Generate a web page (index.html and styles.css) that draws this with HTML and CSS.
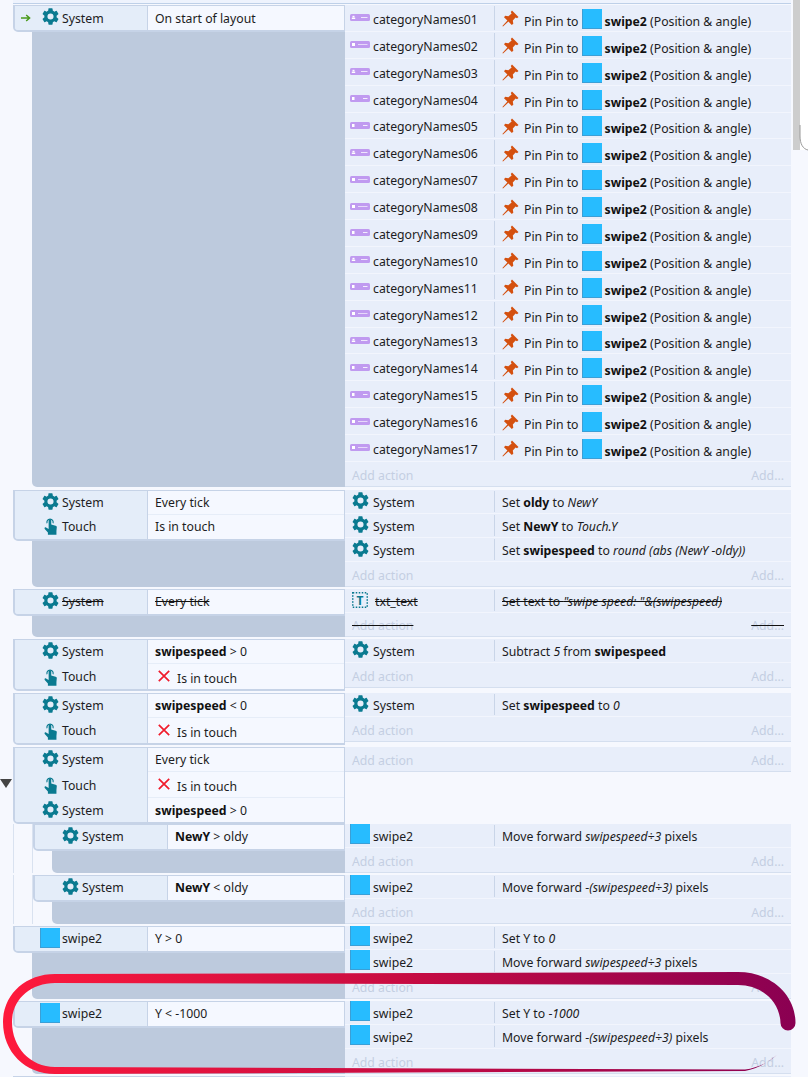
FILE: index.html
```html
<!DOCTYPE html>
<html lang="en">
<head>
<meta charset="utf-8">
<title>Event sheet</title>
<link rel="stylesheet" href="styles.css">
</head>
<body>
<svg class="defs" width="0" height="0" aria-hidden="true">
  <defs>
    <symbol id="gear" viewBox="2.5 2 19 20"><path d="M19.14 12.94c.04-.3.06-.61.06-.94 0-.32-.02-.64-.07-.94l2.03-1.58a.49.49 0 0 0 .12-.61l-1.92-3.32a.488.488 0 0 0-.59-.22l-2.39.96c-.5-.38-1.03-.7-1.62-.94l-.36-2.54a.484.484 0 0 0-.48-.41h-3.84c-.24 0-.43.17-.47.41l-.36 2.54c-.59.24-1.13.57-1.62.94l-2.39-.96c-.22-.08-.47 0-.59.22L2.74 8.87c-.12.21-.08.47.12.61l2.03 1.58c-.05.3-.09.63-.09.94s.02.64.07.94l-2.03 1.58a.49.49 0 0 0-.12.61l1.92 3.32c.12.22.37.29.59.22l2.39-.96c.5.38 1.03.7 1.62.94l.36 2.54c.05.24.24.41.48.41h3.84c.24 0 .44-.17.47-.41l.36-2.54c.59-.24 1.13-.56 1.62-.94l2.39.96c.22.08.47 0 .59-.22l1.92-3.32c.12-.22.07-.47-.12-.61l-2.01-1.58zM12 15.6A3.6 3.6 0 1 1 12 8.4a3.6 3.6 0 0 1 0 7.2z" fill="#0a7a90"/></symbol>
    <symbol id="touch" viewBox="0 0 14 19"><path d="M3.3 6.6A3.4 3.4 0 1 1 9.7 6.6" fill="none" stroke="#0a7a90" stroke-width="1.2"/><path d="M5 3.6a1.4 1.4 0 0 1 2.8 0V8l4.7 1.1c.9.2 1.3.8 1.3 1.6L13.4 15v4H4.2v-2.4L.8 12.6c-.7-1 .4-2.1 1.4-1.4L5 12.6z" fill="#0a7a90"/></symbol>
    <symbol id="pin" viewBox="0 0 17 17"><path d="M10 .5 16.5 7 15 8.2 13.6 7.4 10.8 10.6 11.3 13.8 9.8 15 6.4 11.6 1 16.6.4 16 5.4 10.6 2 7.2 3.2 5.7 6.4 6.2 9.6 3.4 8.8 2z" fill="#d4500f"/></symbol>
    <symbol id="cross" viewBox="0 0 12 12"><path d="M.8.8 11.2 11.2M11.2.8.8 11.2" stroke="#f01c2c" stroke-width="1.7" fill="none"/></symbol>
    <symbol id="arrow" viewBox="0 0 10 8"><path d="M0 4H8M5.2 1 8.6 4 5.2 7" stroke="#4a9a1c" stroke-width="1.5" fill="none"/></symbol>
    <symbol id="cat1" viewBox="0 0 20 7"><rect width="20" height="7" rx="1.5" fill="#c09af0"/><rect x="2.5" y="1.8" width="2" height="1.6" fill="#fff"/><rect x="1.8" y="3.6" width="3.4" height="1.4" fill="#fff"/><rect x="11" y="3" width="6.5" height="1" fill="#efe6fc"/></symbol>
    <symbol id="cat2" viewBox="0 0 20 7"><rect width="20" height="7" rx="1.5" fill="#c09af0"/><rect x="2" y="2" width="3" height="3" fill="#fff"/><rect x="8" y="3" width="9.5" height="1" fill="#e6d8fa"/></symbol>
    <symbol id="cat3" viewBox="0 0 20 7"><rect width="20" height="7" rx="1.5" fill="#c09af0"/><rect x="2" y="2" width="2.5" height="3" fill="#fff"/><rect x="13" y="3" width="4.5" height="1" fill="#f3edfd"/></symbol>
  </defs>
</svg>

<main class="sheet">
  <div class="prev"></div>

  <section class="block b-first">
    <div class="conds">
      <div class="clist">
        <div class="crow r-first"><div class="cname"><svg class="i-arrow"><use href="#arrow"/></svg><svg class="i-gear"><use href="#gear"/></svg><span>System</span></div><div class="cexpr">On start of layout</div></div>
      </div>
      <div class="gray"></div>
    </div>
    <div class="actions">
      <div class="act tall"><div class="aname"><svg class="i-cat"><use href="#cat1"/></svg><span>categoryNames01</span></div><div class="aexpr"><svg class="i-pin"><use href="#pin"/></svg><span>Pin Pin to</span><i class="swatch"></i><span><b>swipe2</b> (Position &amp; angle)</span></div></div>
      <div class="act tall"><div class="aname"><svg class="i-cat"><use href="#cat2"/></svg><span>categoryNames02</span></div><div class="aexpr"><svg class="i-pin"><use href="#pin"/></svg><span>Pin Pin to</span><i class="swatch"></i><span><b>swipe2</b> (Position &amp; angle)</span></div></div>
      <div class="act tall"><div class="aname"><svg class="i-cat"><use href="#cat1"/></svg><span>categoryNames03</span></div><div class="aexpr"><svg class="i-pin"><use href="#pin"/></svg><span>Pin Pin to</span><i class="swatch"></i><span><b>swipe2</b> (Position &amp; angle)</span></div></div>
      <div class="act tall"><div class="aname"><svg class="i-cat"><use href="#cat3"/></svg><span>categoryNames04</span></div><div class="aexpr"><svg class="i-pin"><use href="#pin"/></svg><span>Pin Pin to</span><i class="swatch"></i><span><b>swipe2</b> (Position &amp; angle)</span></div></div>
      <div class="act tall"><div class="aname"><svg class="i-cat"><use href="#cat3"/></svg><span>categoryNames05</span></div><div class="aexpr"><svg class="i-pin"><use href="#pin"/></svg><span>Pin Pin to</span><i class="swatch"></i><span><b>swipe2</b> (Position &amp; angle)</span></div></div>
      <div class="act tall"><div class="aname"><svg class="i-cat"><use href="#cat1"/></svg><span>categoryNames06</span></div><div class="aexpr"><svg class="i-pin"><use href="#pin"/></svg><span>Pin Pin to</span><i class="swatch"></i><span><b>swipe2</b> (Position &amp; angle)</span></div></div>
      <div class="act tall"><div class="aname"><svg class="i-cat"><use href="#cat2"/></svg><span>categoryNames07</span></div><div class="aexpr"><svg class="i-pin"><use href="#pin"/></svg><span>Pin Pin to</span><i class="swatch"></i><span><b>swipe2</b> (Position &amp; angle)</span></div></div>
      <div class="act tall"><div class="aname"><svg class="i-cat"><use href="#cat2"/></svg><span>categoryNames08</span></div><div class="aexpr"><svg class="i-pin"><use href="#pin"/></svg><span>Pin Pin to</span><i class="swatch"></i><span><b>swipe2</b> (Position &amp; angle)</span></div></div>
      <div class="act tall"><div class="aname"><svg class="i-cat"><use href="#cat3"/></svg><span>categoryNames09</span></div><div class="aexpr"><svg class="i-pin"><use href="#pin"/></svg><span>Pin Pin to</span><i class="swatch"></i><span><b>swipe2</b> (Position &amp; angle)</span></div></div>
      <div class="act tall"><div class="aname"><svg class="i-cat"><use href="#cat1"/></svg><span>categoryNames10</span></div><div class="aexpr"><svg class="i-pin"><use href="#pin"/></svg><span>Pin Pin to</span><i class="swatch"></i><span><b>swipe2</b> (Position &amp; angle)</span></div></div>
      <div class="act tall"><div class="aname"><svg class="i-cat"><use href="#cat3"/></svg><span>categoryNames11</span></div><div class="aexpr"><svg class="i-pin"><use href="#pin"/></svg><span>Pin Pin to</span><i class="swatch"></i><span><b>swipe2</b> (Position &amp; angle)</span></div></div>
      <div class="act tall"><div class="aname"><svg class="i-cat"><use href="#cat2"/></svg><span>categoryNames12</span></div><div class="aexpr"><svg class="i-pin"><use href="#pin"/></svg><span>Pin Pin to</span><i class="swatch"></i><span><b>swipe2</b> (Position &amp; angle)</span></div></div>
      <div class="act tall"><div class="aname"><svg class="i-cat"><use href="#cat1"/></svg><span>categoryNames13</span></div><div class="aexpr"><svg class="i-pin"><use href="#pin"/></svg><span>Pin Pin to</span><i class="swatch"></i><span><b>swipe2</b> (Position &amp; angle)</span></div></div>
      <div class="act tall"><div class="aname"><svg class="i-cat"><use href="#cat3"/></svg><span>categoryNames14</span></div><div class="aexpr"><svg class="i-pin"><use href="#pin"/></svg><span>Pin Pin to</span><i class="swatch"></i><span><b>swipe2</b> (Position &amp; angle)</span></div></div>
      <div class="act tall"><div class="aname"><svg class="i-cat"><use href="#cat3"/></svg><span>categoryNames15</span></div><div class="aexpr"><svg class="i-pin"><use href="#pin"/></svg><span>Pin Pin to</span><i class="swatch"></i><span><b>swipe2</b> (Position &amp; angle)</span></div></div>
      <div class="act tall"><div class="aname"><svg class="i-cat"><use href="#cat2"/></svg><span>categoryNames16</span></div><div class="aexpr"><svg class="i-pin"><use href="#pin"/></svg><span>Pin Pin to</span><i class="swatch"></i><span><b>swipe2</b> (Position &amp; angle)</span></div></div>
      <div class="act tall"><div class="aname"><svg class="i-cat"><use href="#cat2"/></svg><span>categoryNames17</span></div><div class="aexpr"><svg class="i-pin"><use href="#pin"/></svg><span>Pin Pin to</span><i class="swatch"></i><span><b>swipe2</b> (Position &amp; angle)</span></div></div>
      <div class="add"><span>Add action</span><span>Add...</span></div>
    </div>
  </section>

  <section class="block">
    <div class="conds">
      <div class="clist">
        <div class="crow"><div class="cname"><svg class="i-gear"><use href="#gear"/></svg><span>System</span></div><div class="cexpr">Every tick</div></div>
        <div class="crow"><div class="cname"><svg class="i-touch"><use href="#touch"/></svg><span>Touch</span></div><div class="cexpr">Is in touch</div></div>
      </div>
      <div class="gray"></div>
    </div>
    <div class="actions">
      <div class="act"><div class="aname"><svg class="i-gear"><use href="#gear"/></svg><span>System</span></div><div class="aexpr">Set&nbsp;<b>oldy</b>&nbsp;to&nbsp;<em>NewY</em></div></div>
      <div class="act"><div class="aname"><svg class="i-gear"><use href="#gear"/></svg><span>System</span></div><div class="aexpr">Set&nbsp;<b>NewY</b>&nbsp;to&nbsp;<em>Touch.Y</em></div></div>
      <div class="act"><div class="aname"><svg class="i-gear"><use href="#gear"/></svg><span>System</span></div><div class="aexpr">Set&nbsp;<b>swipespeed</b>&nbsp;to&nbsp;<em>round (abs (NewY -oldy))</em></div></div>
      <div class="add"><span>Add action</span><span>Add...</span></div>
    </div>
  </section>

  <section class="block off">
    <div class="conds">
      <div class="clist">
        <div class="crow"><div class="cname"><svg class="i-gear"><use href="#gear"/></svg><span>System</span></div><div class="cexpr">Every tick</div></div>
      </div>
      <div class="gray"></div>
    </div>
    <div class="actions">
      <div class="act"><div class="aname"><svg class="i-txt" viewBox="0 0 16 16"><rect x=".75" y=".75" width="14.5" height="14.5" fill="none" stroke="#0a7a90" stroke-width="1.5" stroke-dasharray="1.5 1.5"/><text x="8" y="12.6" text-anchor="middle" class="t-glyph">T</text></svg><span>txt_text</span></div><div class="aexpr">Set text to&nbsp;<em>"swipe speed: "&amp;(swipespeed)</em></div></div>
      <div class="add short"><span>Add action</span><span>Add...</span></div>
    </div>
  </section>

  <section class="block">
    <div class="conds">
      <div class="clist">
        <div class="crow"><div class="cname"><svg class="i-gear"><use href="#gear"/></svg><span>System</span></div><div class="cexpr"><b>swipespeed</b>&nbsp;&gt; 0</div></div>
        <div class="crow inv"><div class="cname"><svg class="i-touch"><use href="#touch"/></svg><span>Touch</span></div><div class="cexpr"><svg class="i-x"><use href="#cross"/></svg><span>Is in touch</span></div></div>
      </div>
    </div>
    <div class="actions">
      <div class="act"><div class="aname"><svg class="i-gear"><use href="#gear"/></svg><span>System</span></div><div class="aexpr">Subtract&nbsp;<em>5</em>&nbsp;from&nbsp;<b>swipespeed</b></div></div>
      <div class="add"><span>Add action</span><span>Add...</span></div>
    </div>
  </section>

  <section class="block">
    <div class="conds">
      <div class="clist">
        <div class="crow"><div class="cname"><svg class="i-gear"><use href="#gear"/></svg><span>System</span></div><div class="cexpr"><b>swipespeed</b>&nbsp;&lt; 0</div></div>
        <div class="crow inv"><div class="cname"><svg class="i-touch"><use href="#touch"/></svg><span>Touch</span></div><div class="cexpr"><svg class="i-x"><use href="#cross"/></svg><span>Is in touch</span></div></div>
      </div>
    </div>
    <div class="actions">
      <div class="act"><div class="aname"><svg class="i-gear"><use href="#gear"/></svg><span>System</span></div><div class="aexpr">Set&nbsp;<b>swipespeed</b>&nbsp;to&nbsp;<em>0</em></div></div>
      <div class="add"><span>Add action</span><span>Add...</span></div>
    </div>
  </section>

  <section class="block tight">
    <span class="toggle"></span>
    <div class="conds">
      <div class="clist">
        <div class="crow"><div class="cname"><svg class="i-gear"><use href="#gear"/></svg><span>System</span></div><div class="cexpr">Every tick</div></div>
        <div class="crow inv"><div class="cname"><svg class="i-touch"><use href="#touch"/></svg><span>Touch</span></div><div class="cexpr"><svg class="i-x"><use href="#cross"/></svg><span>Is in touch</span></div></div>
        <div class="crow"><div class="cname"><svg class="i-gear"><use href="#gear"/></svg><span>System</span></div><div class="cexpr"><b>swipespeed</b>&nbsp;&gt; 0</div></div>
      </div>
    </div>
    <div class="actions">
      <div class="add"><span>Add action</span><span>Add...</span></div>
    </div>
  </section>

  <section class="block sub">
    <div class="conds">
      <div class="nest"><div class="nest-in">
        <div class="clist">
          <div class="crow"><div class="cname"><svg class="i-gear"><use href="#gear"/></svg><span>System</span></div><div class="cexpr"><b>NewY</b>&nbsp;&gt; oldy</div></div>
        </div>
        <div class="gray"></div>
      </div></div>
    </div>
    <div class="actions">
      <div class="act"><div class="aname"><i class="swatch"></i><span>swipe2</span></div><div class="aexpr">Move forward&nbsp;<em>swipespeed÷3</em>&nbsp;pixels</div></div>
      <div class="add"><span>Add action</span><span>Add...</span></div>
    </div>
  </section>

  <section class="block sub">
    <div class="conds">
      <div class="nest"><div class="nest-in">
        <div class="clist">
          <div class="crow"><div class="cname"><svg class="i-gear"><use href="#gear"/></svg><span>System</span></div><div class="cexpr"><b>NewY</b>&nbsp;&lt; oldy</div></div>
        </div>
        <div class="gray"></div>
      </div></div>
    </div>
    <div class="actions">
      <div class="act"><div class="aname"><i class="swatch"></i><span>swipe2</span></div><div class="aexpr">Move forward -<em>(swipespeed÷3)</em>&nbsp;pixels</div></div>
      <div class="add"><span>Add action</span><span>Add...</span></div>
    </div>
  </section>

  <section class="block">
    <div class="conds">
      <div class="clist">
        <div class="crow"><div class="cname"><i class="swatch"></i><span>swipe2</span></div><div class="cexpr">Y &gt; 0</div></div>
      </div>
      <div class="gray"></div>
    </div>
    <div class="actions">
      <div class="act"><div class="aname"><i class="swatch"></i><span>swipe2</span></div><div class="aexpr">Set Y to&nbsp;<em>0</em></div></div>
      <div class="act"><div class="aname"><i class="swatch"></i><span>swipe2</span></div><div class="aexpr">Move forward&nbsp;<em>swipespeed÷3</em>&nbsp;pixels</div></div>
      <div class="add"><span>Add action</span><span>Add...</span></div>
    </div>
  </section>

  <section class="block">
    <div class="conds">
      <div class="clist">
        <div class="crow"><div class="cname"><i class="swatch"></i><span>swipe2</span></div><div class="cexpr">Y &lt; -1000</div></div>
      </div>
      <div class="gray"></div>
    </div>
    <div class="actions">
      <div class="act"><div class="aname"><i class="swatch"></i><span>swipe2</span></div><div class="aexpr">Set Y to -<em>1000</em></div></div>
      <div class="act"><div class="aname"><i class="swatch"></i><span>swipe2</span></div><div class="aexpr">Move forward -<em>(swipespeed÷3)</em>&nbsp;pixels</div></div>
      <div class="add"><span>Add action</span><span>Add...</span></div>
    </div>
  </section>

  <section class="block">
    <div class="conds"><div class="clist"><div class="crow"><div class="cname"></div><div class="cexpr"></div></div></div></div>
    <div class="actions"><div class="act"></div></div>
  </section>
</main>

<div class="corner"></div>
<div class="scrollbar"></div>

<svg class="overlay" viewBox="0 0 808 1077" aria-hidden="true">
  <defs>
    <linearGradient id="ink" gradientUnits="userSpaceOnUse" x1="0" y1="0" x2="795" y2="0">
      <stop offset="0" stop-color="#ff1a3c"/>
      <stop offset=".5" stop-color="#c80c42"/>
      <stop offset="1" stop-color="#8a0052"/>
    </linearGradient>
  </defs>
  <path d="M795.5 1023C795.5 994 770 972 738 972L55 974C25 974 3 995 3 1022C3 1052 25 1074 55 1074L400 1072.5L745 1071C760 1068 772 1060 781 1051C772 1060.500 760 1067.500 745 1069.500L55 1067C30 1067 12 1047 12 1022C12 1000 30 983 55 983L738 985C762 985 780 1002 780.500 1023A7.500 7.500 0 0 0 795.500 1023Z" fill="url(#ink)"/>
  <path d="M800 125V136C800 144 803 149 808 150" fill="none" stroke="#9a9a9a" stroke-width="1"/>
</svg>
</body>
</html>
```
FILE: styles.css
```css
* { box-sizing: border-box; }
html, body { margin: 0; height: 1077px; overflow: hidden; }
body {
  position: relative;
  background: #f6f8fe;
  color: #1c1c22;
  font-family: "Noto Sans", "Open Sans", sans-serif;
  font-size: 12.25px;
  line-height: 16px;
}
.defs { position: absolute; }
svg { display: block; flex: none; }
b { font-weight: 700; color: #111; }
em { font-style: italic; }

.sheet { width: 791px; padding-left: 13px; }
.prev {
  height: 4px;
  margin-bottom: 1px;
  background: #eef3fd;
  border-bottom: 1px solid #bed0e8;
}

.block {
  position: relative;
  display: grid;
  grid-template-columns: 332px 446px;
  margin-bottom: 2px;
}
.block.b-first { margin-bottom: 3px; }
.block.tight { margin-bottom: 0; }
.block.sub { margin-bottom: 0; padding-bottom: 2px; }

.conds { display: flex; flex-direction: column; min-height: 100%; }
.clist {
  border: 1px solid #c6d3e7;
  border-left-width: 2px;
  border-bottom-width: 2px;
  border-bottom-left-radius: 5px;
  overflow: hidden;
  background: #e4edf9;
}
.crow { display: grid; grid-template-columns: 133px 1fr; height: 24px; }
.crow.inv { height: 25px; }
.tight .crow.inv { height: 26px; }
.cname {
  position: relative;
  display: flex;
  align-items: center;
  padding-left: 47px;
  background: #e4edf9;
  border-right: 1px solid #c6d3e7;
}
.cexpr {
  display: flex;
  align-items: center;
  padding: 1px 0 0 7px;
  background: #f5f8ff;
  border-bottom: 1px solid #e6edf8;
}
.crow:last-child .cexpr { border-bottom: 0; }
.r-first .cname, .r-first .cexpr { padding-top: 2px; }
.tight .crow:last-child .cname, .tight .crow:last-child .cexpr { padding-top: 3px; }
.cname .i-gear { position: absolute; left: 27px; top: 2px; }
.tight .crow:last-child .i-gear { top: 3px; }
.cname .i-touch { position: absolute; left: 29px; top: 2px; }
.inv .cname .i-touch { top: 4px; }
.inv .cname span { position: relative; top: 1px; }
.cname .swatch { position: absolute; left: 25px; top: 1px; }
.i-arrow { position: absolute; left: 6px; top: 8px; width: 10px; height: 8px; }

.gray {
  flex: 1;
  margin-left: 19px;
  background: #bdcadd;
  border-bottom-left-radius: 5px;
}

.nest { flex: 1; display: flex; border-left: 1px solid #d9e2f0; padding-left: 18px; }
.nest-in { flex: 1; display: flex; flex-direction: column; border-left: 1px solid #d9e2f0; min-width: 0; }
.sub .gray { margin-left: 19px; }

.actions { align-self: start; background: #e8eefa; }
.act {
  display: grid;
  grid-template-columns: 150px 1fr;
  height: 24px;
  border-bottom: 1px solid #f2f5fd;
}
.act.tall { height: 26.875px; }
.aname {
  display: flex;
  align-items: center;
  gap: 3px;
  padding-left: 5px;
  border-right: 1px solid #c9d5e8;
  margin: 1px 0;
}
.aname > span { position: relative; top: 2px; }
.aname > svg.i-gear { margin: -1px 1px 0 2px; }
.aname > .swatch { margin-top: -2px; }
.aexpr { display: flex; align-items: center; padding: 4px 0 0 7px; white-space: nowrap; }
.tall .aexpr { padding-top: 2px; }
.tall .aexpr > span { position: relative; top: 3px; }
.add {
  display: flex;
  justify-content: space-between;
  align-items: center;
  height: 25px;
  padding: 4px 7px 0;
  color: #c4cee2;
  border-bottom: 1px solid #d5dfef;
}
.add.short { height: 24px; }

.i-gear { width: 17px; height: 17px; }
.i-touch { width: 13px; height: 18px; }
.i-pin { width: 17px; height: 17px; margin-right: 5px; }
.i-cat { width: 20px; height: 7px; }
.i-x { width: 12px; height: 12px; margin: -2px 7px 0 3px; }
.i-txt { width: 16px; height: 16px; margin: 0 4px 0 2px; }
.t-glyph { font: 700 12px "Noto Sans", sans-serif; fill: #0a7a90; }
.inv .cexpr span { position: relative; top: 2px; }
.swatch {
  display: block;
  flex: none;
  width: 20px;
  height: 20px;
  background: #27bcff;
  border-left: 1px solid #3b9fd6;
  border-bottom: 1px solid #3b9fd6;
}
.aexpr .swatch { margin: 0 3px 0 3px; }

.off span, .off .cexpr, .off .aexpr { text-decoration: line-through; text-decoration-color: #111; }
.off em { text-decoration: line-through; text-decoration-color: #111; }

.toggle {
  position: absolute;
  left: -13px;
  top: 32px;
  width: 0;
  height: 0;
  border-left: 6px solid transparent;
  border-right: 6px solid transparent;
  border-top: 9px solid #444;
}

.corner { position: absolute; left: 800px; top: 0; width: 8px; height: 150px; background: #fff; }
.scrollbar { position: absolute; left: 793px; top: 0; width: 7px; height: 150px; background: #cdcdcd; }
.overlay { position: absolute; left: 0; top: 0; width: 808px; height: 1077px; pointer-events: none; }
```
